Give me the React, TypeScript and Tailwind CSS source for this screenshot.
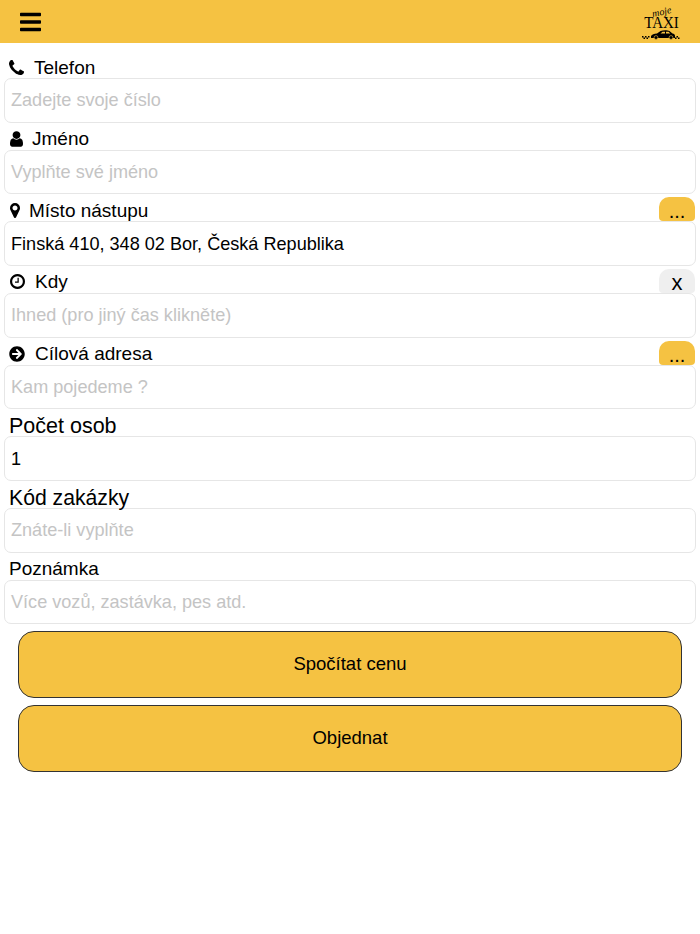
import { FaBars, FaArrowCircleRight } from "react-icons/fa";
import type { ReactNode } from "react";

const font = { fontFamily: '"Liberation Sans", Arial, sans-serif' };

function Glyph({ box, d, className }: { box: string; d: string; className: string }) {
  return (
    <svg className={className} viewBox={box} fill="currentColor">
      <path d={d} />
    </svg>
  );
}

const phone = "M1600 1240q0 27-10 70.500t-21 68.500q-21 50-122 106-94 51-186 51-27 0-53-3.500t-57.500-12.500-47-14.500-55.500-20.500-49-18q-98-35-175-83-127-79-264-216t-216-264q-48-77-83-175-3-9-18-49t-20.500-55.500-14.500-47-12.500-57.500-3.500-53q0-92 51-186 56-101 106-122 25-11 68.500-21t70.500-10q14 0 21 3 18 6 53 76 11 19 30 54t35 63.500 31 53.500q3 4 17.500 25t21.500 35.500 7 28.500q0 20-28.500 50t-62 55-62 53-28.500 46q0 9 5 22.500t8.500 20.500 14 24 11.500 19q76 137 174 235t235 174q2 1 19 11.500t24 14 20.500 8.500 22.500 5q18 0 46-28.500t53-62 55-62 50-28.500q14 0 28.500 7t35.500 21.500 25 17.500q25 15 53.500 31t63.500 35 54 30q70 35 76 53 3 7 3 21z";
const user = "M1536 1399q0 109-62.500 187t-150.500 78h-854q-88 0-150.500-78t-62.500-187q0-85 8.500-160.500t31.500-152 58.500-131 94-89 134.500-34.500q131 128 313 128t313-128q76 0 134.500 34.500t94 89 58.500 131 31.500 152 8.500 160.500zm-256-887q0 159-112.500 271.500t-271.500 112.500-271.500-112.500-112.500-271.500 112.500-271.500 271.500-112.500 271.500 112.500 112.500 271.500z";
const marker = "M1152 640q0-106-75-181t-181-75-181 75-75 181 75 181 181 75 181-75 75-181zm256 0q0 109-33 179l-364 774q-16 33-47.500 52t-67.500 19-67.500-19-46.500-52l-365-774q-33-70-33-179 0-212 150-362t362-150 362 150 150 362z";
const clock = "M1024 544v448q0 14-9 23t-23 9h-320q-14 0-23-9t-9-23v-64q0-14 9-23t23-9h224v-352q0-14 9-23t23-9h64q14 0 23 9t9 23zm416 352q0-148-73-273t-198-198-273-73-273 73-198 198-73 273 73 273 198 198 273 73 273-73 198-198 73-273zm224 0q0 209-103 385.500t-279.500 279.500-385.500 103-385.500-103-279.500-279.500-103-385.500 103-385.500 279.500-279.500 385.500-103 385.500 103 279.500 279.500 103 385.500z";

function Logo() {
  return (
    <div className="relative w-[38px] h-[38px] text-black">
      <span className="absolute left-[10px] top-[4px] text-[10px] leading-[10px] italic -rotate-12 font-['Liberation_Serif',serif]">moje</span>
      <span className="absolute left-0 top-[14px] w-[38px] text-center text-[17px] leading-[12px] scale-x-[0.88] font-['Liberation_Serif',serif]">TAXI</span>
      <svg className="absolute left-0 top-[27px]" width="38" height="10" viewBox="0 0 38 10">
        <path d="M9 6c1-1.500 3-2.300 6-2.600l3.500-2.400c3-1 7-.9 9 0l3 2.400c1.500.3 2.500 1 2.500 2.400V8H9z" fill="#000" />
        <path d="M18.500 3.500l2-1.700h2.500v1.700zM24 1.800h2.500l1.800 1.700H24z" fill="#f5c242" />
        <circle cx="14" cy="7.500" r="1.900" fill="#000" stroke="#f5c242" strokeWidth=".6" />
        <circle cx="29" cy="7.500" r="1.900" fill="#000" stroke="#f5c242" strokeWidth=".6" />
        <path d="M0 6h1.500v1.500H0zM1.500 7.500H3V9H1.500zM3 6h1.500v1.500H3zM4.500 7.500H6V9H4.500zM6 6h1.500v1.500H6zM33 7.500h1.500V9H33zM34.500 6H36v1.500h-1.500zM36 7.500h1.500V9H36z" fill="#000" />
      </svg>
    </div>
  );
}

function Field({ label, icon, placeholder, value, action, labelClass = "text-[19px] leading-[21px] mb-[0.500px]", gap = "gap-2", pad = "pl-[9px]" }: {
  label: string;
  icon?: ReactNode;
  placeholder?: string;
  value?: string;
  action?: ReactNode;
  labelClass?: string;
  gap?: string;
  pad?: string;
}) {
  return (
    <div>
      <div className={`h-[27px] ${pad} pr-[5px] flex items-end justify-between`}>
        <div className={`flex items-center ${gap} text-black ${labelClass}`}>
          {icon}
          <span>{label}</span>
        </div>
        {action}
      </div>
      <div className="mx-1 h-[44.670px] rounded-[7px] border border-[#e6e6e6] bg-white px-[6px] pt-px flex items-center text-[18.100px]">
        {value ? <span className="text-black">{value}</span> : <span className="text-[#c4c4c4]">{placeholder}</span>}
      </div>
    </div>
  );
}

function SmallButton({ children, gray }: { children: ReactNode; gray?: boolean }) {
  return (
    <div className={`w-9 h-[24px] rounded-t-[10px] rounded-b-[4px] flex items-end justify-center text-black leading-[20px] ${gray ? "bg-[#efefef] text-[22px]" : "bg-[#f5c242] text-[20px]"}`}>
      {children}
    </div>
  );
}

export default function App() {
  return (
    <div className="min-h-[934px] bg-white" style={font}>
      <header className="h-[43px] bg-[#f5c242] flex items-center justify-between pl-5 pr-[20px]">
        <FaBars className="w-[21px] h-[24px] text-black" />
        <Logo />
      </header>
      <main className="pt-2">
        <Field label="Telefon" placeholder="Zadejte svoje číslo" gap="gap-[10px]" icon={<Glyph box="192 128 1408 1408" d={phone} className="w-[15px] h-[15px]" />} />
        <Field label="Jméno" placeholder="Vyplňte své jméno" pad="pl-[10px]" gap="gap-[9px]" icon={<Glyph box="256 128 1280 1536" d={user} className="w-[13px] h-[16px]" />} />
        <Field label="Místo nástupu" value="Finská 410, 348 02 Bor, Česká Republika" pad="pl-[10px]" gap="gap-[9px]" icon={<Glyph box="384 128 1024 1536" d={marker} className="w-[10px] h-[15px]" />} action={<SmallButton>...</SmallButton>} />
        <Field label="Kdy" placeholder="Ihned (pro jiný čas klikněte)" pad="pl-[10px]" gap="gap-[10px]" icon={<Glyph box="128 128 1536 1536" d={clock} className="w-[15px] h-[15px]" />} action={<SmallButton gray>x</SmallButton>} />
        <Field label="Cílová adresa" placeholder="Kam pojedeme ?" pad="pl-[9px]" gap="gap-[10px]" icon={<FaArrowCircleRight className="w-[16px] h-[16px]" />} action={<SmallButton>...</SmallButton>} />
        <Field label="Počet osob" value="1" labelClass="text-[21.500px] leading-[19px]" />
        <Field label="Kód zakázky" placeholder="Znáte-li vyplňte" labelClass="text-[21.200px] leading-[21px]" />
        <Field label="Poznámka" placeholder="Více vozů, zastávka, pes atd." />
        <div className="mt-[7px] mx-[18px] flex flex-col gap-[7px]">
          <button className="h-[67px] pb-px rounded-[16px] border border-[#333] bg-[#f5c242] text-black text-[18.500px]">Spočítat cenu</button>
          <button className="h-[67px] pb-px rounded-[16px] border border-[#333] bg-[#f5c242] text-black text-[18.500px]">Objednat</button>
        </div>
      </main>
    </div>
  );
}
